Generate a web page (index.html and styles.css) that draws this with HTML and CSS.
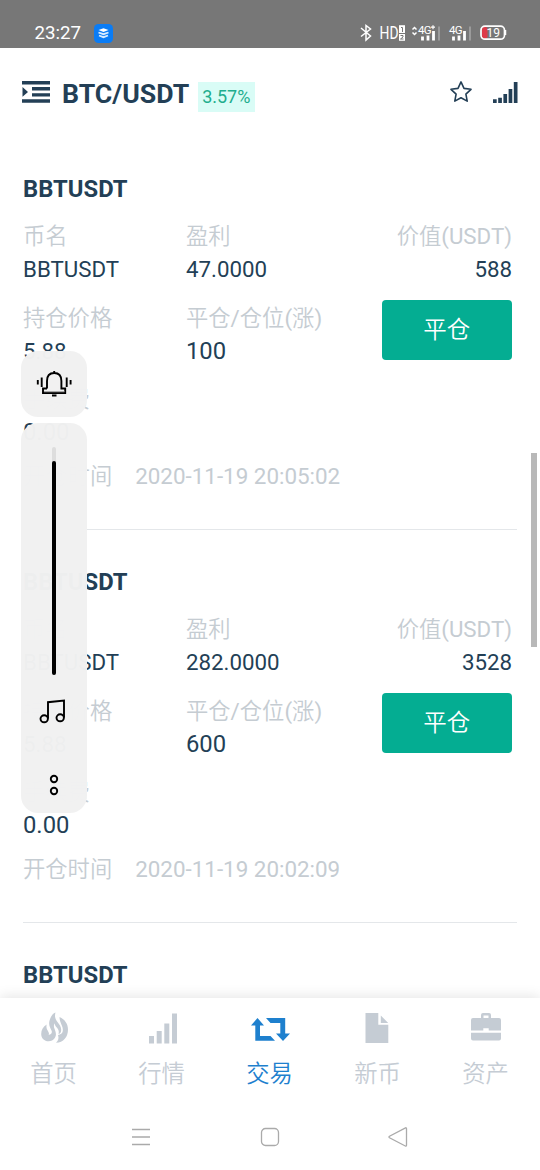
FILE: index.html
```html
<!DOCTYPE html>
<html lang="zh-CN">
<head>
<meta charset="utf-8">
<title>BTC/USDT</title>
<link rel="stylesheet" href="styles.css">
</head>
<body>
<div class="screen">
  <div class="status">
    <span class="clock">23:27</span>
    <svg class="app" width="19" height="19" viewBox="0 0 19 19"><rect width="19" height="19" rx="4.5" fill="#0a7cf5"/><path d="M4.500 6 9.500 4.300l5 1.700-5 1.900z" fill="#fff"/><path d="M4.500 8.500 9.500 10.200 14.500 8.500M5 11.500 9.500 13.200 14 11.500" fill="none" stroke="#d9ecff" stroke-width="1.800"/></svg>
    <svg class="signals" width="150" height="22" viewBox="0 0 150 22" fill="none" stroke="#fff">
      <path d="M1 6 10.500 14 6 18V3.500l4.500 3.500L1 14.500" stroke-width="1.500"/>
      <text class="st-hd" x="19.500" y="17" textLength="19" lengthAdjust="spacingAndGlyphs">HD</text>
      <path d="M39 3.200h6v15.600h-6z" fill="#fff" stroke="none"/>
      <path d="M41 5.500h1.500V10M39 11.500h6M40.500 13.500h2.500v1.500l-2.500 2h3" stroke="#777" stroke-width="1"/>
      <path d="M52.500 7.500 54.500 5.500 56.500 7.500M52.500 10.500 54.500 12.500 56.500 10.500" stroke-width="1.500"/>
      <text class="st-net" x="58" y="11.500">4G</text><path d="M71 5.200h4M73 3.200v4" stroke-width="1.200"/>
      <path d="M62.500 18.500v-4M68 18.500V13.500M73.500 18.500V9" stroke-width="2.800"/><path d="M79 18.500V4.500" stroke="#9b9b9b" stroke-width="2"/>
      <text class="st-net" x="89" y="11.500">4G</text>
      <path d="M93.500 18.500v-4M99 18.500V13.500M104.500 18.500V9" stroke-width="2.800"/><path d="M110 18.500V4.500" stroke="#9b9b9b" stroke-width="2"/>
      <rect x="122" y="5" width="5.500" height="11.500" rx="2" fill="#dd3b4a" stroke="none"/>
      <rect x="121" y="4.200" width="23.500" height="13" rx="4" stroke-width="1.700"/><path d="M145.500 8v5" stroke-width="1.500"/>
      <text class="st-bat" x="126.500" y="15">19</text>
    </svg>
  </div>

  <header class="header">
    <svg class="menu" width="28" height="22" viewBox="0 0 28 22" fill="#233f56"><path d="M0 0h28v3.400H0zM10 6h18v3.400H10zM10 12.200h18v3.400H10zM0 18.300h28v3.400H0zM.5 6v9.800L6 10.900z"/></svg>
    <h1 class="pair">BTC/USDT</h1>
    <span class="change">3.57%</span>
    <svg class="star" width="22" height="22" viewBox="0 0 22 22"><path d="m11 .9 3 6.500 7 .9-5.100 4.800 1.300 7L11 16.700l-6.200 3.400 1.300-7L1 8.300l7-.9z" fill="none" stroke="#233f56" stroke-width="1.600" stroke-linejoin="round"/></svg>
    <svg class="bars" width="25" height="21" viewBox="0 0 25 21" fill="#233f56"><path d="M0 17.300h3.700V21H0zM5.200 15.700h3.700V21H5.200zM10.400 12h3.700v9h-3.700zM15.600 7h3.700v14h-3.700zM20.800 0h3.700v21h-3.700z"/></svg>
  </header>

  <main class="list">
    <article class="position">
      <h2 class="name">BBTUSDT</h2>
      <div class="row">
        <div class="cell"><span class="label">币名</span><span class="value">BBTUSDT</span></div>
        <div class="cell"><span class="label">盈利</span><span class="value">47.0000</span></div>
        <div class="cell end"><span class="label">价值<span class="latin">(USDT)</span></span><span class="value">588</span></div>
      </div>
      <div class="row">
        <div class="cell"><span class="label">持仓价格</span><span class="value">5.88</span></div>
        <div class="cell"><span class="label">平仓<span class="latin">/</span>仓位<span class="latin">(</span>涨<span class="latin">)</span></span><span class="value large">100</span></div>
        <button class="close">平仓</button>
      </div>
      <div class="row">
        <div class="cell"><span class="label">手续费</span><span class="value large">0.00</span></div>
      </div>
      <div class="time"><span>开仓时间</span><span class="latin">2020-11-19 20:05:02</span></div>
    </article>
    <article class="position">
      <h2 class="name">BBTUSDT</h2>
      <div class="row">
        <div class="cell"><span class="label">币名</span><span class="value">BBTUSDT</span></div>
        <div class="cell"><span class="label">盈利</span><span class="value">282.0000</span></div>
        <div class="cell end"><span class="label">价值<span class="latin">(USDT)</span></span><span class="value">3528</span></div>
      </div>
      <div class="row">
        <div class="cell"><span class="label">持仓价格</span><span class="value">5.88</span></div>
        <div class="cell"><span class="label">平仓<span class="latin">/</span>仓位<span class="latin">(</span>涨<span class="latin">)</span></span><span class="value large">600</span></div>
        <button class="close">平仓</button>
      </div>
      <div class="row">
        <div class="cell"><span class="label">手续费</span><span class="value large">0.00</span></div>
      </div>
      <div class="time"><span>开仓时间</span><span class="latin">2020-11-19 20:02:09</span></div>
    </article>
    <article class="position">
      <h2 class="name">BBTUSDT</h2>
    </article>
  </main>

  <nav class="tabs">
    <a class="tab"><svg width="40" height="32" viewBox="0 0 40 32" fill="currentColor"><path d="M21.500-.5C20.500 3 21 6 23.500 9c2.500 3 4.300 6 3.500 9.500-.3 1.500-1.300 2.300-2.500 2.500.7-2.500 0-4.500-1.500-6.200-1.300-1.500-2.200-2.800-2.300-4.600-1.200 2-1 3.800-.1 5.800 1.500 3.500 2 6.500 0 9.300-1.300 2-3.500 3-6 3-4.300 0-7.400-3-7.400-7.300 0-4 2-7.500 5.500-9.500-.8 3 .3 5 1.500 7 .9 1.500 1 2.500.3 3.500 2.800-.3 4-2 3-4.500-1.500-3.500-3.300-6.200-1.800-10.500 1-3.500 3-6.500 5.800-7.500z"/><path d="M25.500 4C31 6.500 34 11 34 16.500c0 7.500-4.500 13-12 13.300 2.500-2.300 3-4.800 2-7.800 2.700-.3 4.300-1.500 4.800-4C29.500 13 25.500 10 25.500 4z"/></svg><span>首页</span></a>
    <a class="tab"><svg width="40" height="32" viewBox="0 0 40 32" fill="currentColor"><path d="M7 23h5v7.500H7zM14.700 18h5v12.500h-5zM22.300 10.500h5v20h-5zM30 .5h5v30h-5z"/></svg><span>行情</span></a>
    <a class="tab active"><svg width="40" height="32" viewBox="0 0 40 32" fill="currentColor"><path d="M7.500 5 14 12.500h-4V23h10.500l4.500 4.700H5.300V12.500H1zM16 5h19.200v15.500H40l-7 7.500-7-7.500h4.300V10H20.500z"/></svg><span>交易</span></a>
    <a class="tab"><svg width="40" height="32" viewBox="0 0 40 32" fill="currentColor"><path d="M7.500 0h12.800v11.700h10V30H7.500zM22.800 2.500 30.200 10h-7.400z"/></svg><span>新币</span></a>
    <a class="tab"><svg width="40" height="32" viewBox="0 0 40 32" fill="currentColor"><path fill-rule="evenodd" d="M15 5v-3q0-2 2-2h6q2 0 2 2v3h8q2 0 2 2v10.500H22.700v-2.200h-5.400v2.200H5V7q0-2 2-2zM17.500 5h5V2.500h-5zM5 19.700h30V25.500q0 2-2 2H7q-2 0-2-2z"/></svg><span>资产</span></a>
  </nav>
  <div class="system">
    <svg width="20" height="20" viewBox="0 0 20 20"><path d="M1 2.500h18M1 10h18M1 17.500h18"/></svg>
    <svg width="20" height="20" viewBox="0 0 20 20"><rect x="1.500" y="1.500" width="17" height="17" rx="4"/></svg>
    <svg width="20" height="20" viewBox="0 0 20 20"><path d="M17.500.8Q18.500.5 18.500 1.800v16.400Q18.500 19.500 17.300 19L1.500 10.800Q.5 10 1.500 9.200z"/></svg>
  </div>

  <div class="scrollbar"></div>
  <div class="volume">
    <div class="ringer"><svg width="36" height="28" viewBox="0 0 36 28" fill="none" stroke="#000" stroke-width="1.900"><path d="M11 18.500V11q0-8 7.200-8t7.200 8v7.500h3.800V23H7v-4.500h4M18.200 1v2M5.700 7.500V17M30.700 7.500V17M1.800 10v4.500M34.600 10v4.500M16 25.500h4.500"/><path d="M8 21.800h20.500" stroke="#888" stroke-width="1"/></svg></div>
    <div class="panel">
      <div class="track"><div class="level"></div></div>
      <svg class="note" width="27" height="25" viewBox="0 0 27 25" fill="none" stroke="#000" stroke-width="1.900"><path d="M9 19.500V3.200L25 1.500v17"/><ellipse cx="5.200" cy="19.800" rx="3.700" ry="3.500"/><ellipse cx="21.200" cy="18.800" rx="3.700" ry="3.500"/></svg>
      <svg class="more" width="10" height="22" viewBox="0 0 10 22" fill="none" stroke="#000" stroke-width="1.900"><circle cx="5" cy="5" r="3.200"/><circle cx="5" cy="17" r="3.200"/></svg>
    </div>
  </div>
</div>
</body>
</html>
```
FILE: styles.css
```css
* { box-sizing: border-box; }
body { margin: 0; }
svg { display: block; flex: none; }
.screen {
  position: relative;
  display: flex;
  flex-direction: column;
  width: 540px;
  height: 1170px;
  overflow: hidden;
  background: #fff;
  color: #233f56;
  font-family: Roboto, "Noto Sans CJK SC", sans-serif;
  font-size: 22.3px;
}
.status {
  display: flex;
  flex: none;
  height: 48px;
  padding: 22px 30px 0 34.5px;
  background: #777;
  color: #fff;
}
.clock { width: 59.5px; font-size: 18.7px; line-height: 22px; }
.app { margin-top: 1.5px; }
.signals { margin: 0 0 0 auto; }
.signals text { fill: #fff; stroke: none; font-family: Roboto, sans-serif; }
.signals .st-hd { font-size: 18px; }
.signals .st-net { font-size: 11.5px; letter-spacing: -.8px; font-weight: 400; }
.signals .st-bat { font-size: 12px; }

.header {
  display: flex;
  flex: none;
  align-items: flex-start;
  height: 89px;
  padding: 32.5px 22px 0 22px;
}
.pair { margin: -3.5px 0 0 12px; font-size: 26.7px; line-height: 34px; font-weight: 700; }
.change {
  width: 57px;
  height: 30px;
  margin: 1.5px 0 0 8.5px;
  background: #d9fcf6;
  color: #21ad8d;
  font-size: 18px;
  line-height: 30px;
  text-align: center;
}
.star { margin: 0 21px 0 auto; }
.bars { margin-top: 1.5px; }

.list { flex: 1; min-height: 0; overflow: hidden; padding: 0 23px; }
.position { height: 393px; padding: 36px 5px 0 0; border-bottom: 1px solid #e4e7ea; }
.name { margin: 0 0 15px; font-size: 23.8px; line-height: 32px; font-weight: 700; }
.row { display: grid; grid-template-columns: 163px 163px 1fr; height: 81.5px; }
.cell { display: flex; flex-direction: column; white-space: nowrap; }
.end { align-items: flex-end; }
.label { height: 32px; line-height: 32px; color: #c5ccd2; font-weight: 350; }
.latin { font-weight: 400; }
.value { line-height: 34px; }
.large { font-size: 23.8px; }
.close {
  justify-self: end;
  width: 130.5px;
  height: 60px;
  margin: -2px 0 0;
  padding: 0;
  border: 0;
  border-radius: 4px;
  background: #04ad92;
  color: #fff;
  font: 350 23.5px/60px Roboto, "Noto Sans CJK SC", sans-serif;
}
.time { display: flex; gap: 23px; margin-top: -4.5px; line-height: 32px; color: #c5ccd2; font-weight: 350; }
.time .latin { font-size: 22.4px; }

.tabs {
  position: relative;
  display: grid;
  grid-template-columns: repeat(5, 108px);
  flex: none;
  height: 107px;
  padding-top: 15px;
  background: #fff;
  box-shadow: 0 -2px 12px rgba(0, 0, 0, .1);
}
.tab { display: flex; flex-direction: column; align-items: center; color: #c5ccd4; font-size: 23.3px; line-height: 34px; font-weight: 350; }
.tab svg { overflow: visible; }
.tab span { margin: 12px 1px 0 0; }
.active { color: #1e80ce; }
.system { position: relative; display: flex; flex: none; justify-content: center; gap: 108.5px; height: 65px; padding: 22px 1px 0 0; background: #fff; }
.system svg { fill: none; stroke: #aaa; stroke-width: 1.3; }

.scrollbar { position: absolute; top: 453px; right: 3px; width: 6px; height: 194px; background: #b8b8b8; }
.volume { position: absolute; top: 351px; left: 21px; display: flex; flex-direction: column; gap: 6px; width: 66px; }
.ringer, .panel { border-radius: 17px; background: rgba(241, 241, 241, .985); }
.ringer { display: flex; justify-content: center; height: 66px; padding-top: 19px; }
.panel { display: flex; flex-direction: column; align-items: center; height: 390px; padding-top: 24px; }
.track { display: flex; align-items: flex-end; width: 4px; height: 228px; border-radius: 2px; background: #ddd; }
.level { width: 4px; height: 214px; border-radius: 2px; background: #000; }
.note { margin-top: 24px; margin-right: 3px; }
.more { margin-top: 49.5px; }
```
